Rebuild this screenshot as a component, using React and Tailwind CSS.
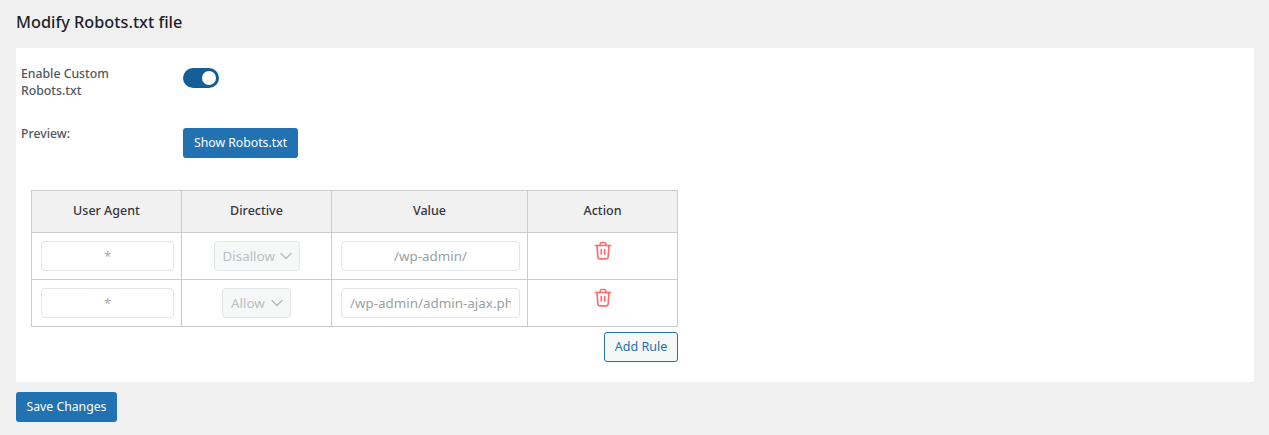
import { ChevronDown } from "lucide-react";

const rules = [
  { agent: "*", directive: "Disallow", selectWidth: "w-[86px]", value: "/wp-admin/", align: "text-center" },
  { agent: "*", directive: "Allow", selectWidth: "w-[69px]", value: "/wp-admin/admin-ajax.php", align: "text-left" },
];

const headers = ["User Agent", "Directive", "Value", "Action"];

function TrashIcon() {
  return (
    <svg width="18" height="20" viewBox="0 0 18 20" fill="none" stroke="#ff6b6f" strokeWidth="1.7" strokeLinecap="round" strokeLinejoin="round">
      <path d="M1.5 4.5h15" />
      <path d="M6.2 4.5V3a1.5 1.5 0 0 1 1.5-1.5h2.6A1.5 1.5 0 0 1 11.8 3v1.5" />
      <path d="M3 4.5l.8 11.5a2 2 0 0 0 2 1.8h6.4a2 2 0 0 0 2-1.8L15 4.5" />
      <path d="M7.3 8.5v4.5M10.7 8.5v4.5" />
    </svg>
  );
}

function RuleRow({ rule }) {
  return (
    <tr>
      <td className="border border-[#ccc] h-[47px] px-[9px] py-0 align-middle">
        <input
          readOnly
          value={rule.agent}
          className="w-[133px] h-[30px] block rounded border border-[#e2e4e7] bg-white text-center text-[13px] text-[#a7aaad] outline-none"
        />
      </td>
      <td className="border border-[#ccc] px-0 py-0 align-middle text-center">
        <div className={`relative inline-block align-middle h-[30px] ${rule.selectWidth}`}>
          <select
            disabled
            className="appearance-none w-full h-full rounded border border-[#e2e4e7] bg-[#f6f7f7] pl-2 text-[13.4px] text-[#bcbfc2] outline-none"
          >
            <option>{rule.directive}</option>
          </select>
          <ChevronDown size={20} strokeWidth={1.5} className="absolute right-[4px] top-[5px] text-[#b5b8bb]" />
        </div>
      </td>
      <td className="border border-[#ccc] px-[9px] py-0 align-middle">
        <input
          readOnly
          value={rule.value}
          className={`w-[179px] h-[30px] block rounded border border-[#e2e4e7] bg-white px-2 text-[13.4px] text-[#9b9fa3] outline-none ${rule.align}`}
        />
      </td>
      <td className="border border-[#ccc] p-0 align-top text-center">
        <div className="flex justify-center pt-[8px]">
          <TrashIcon />
        </div>
      </td>
    </tr>
  );
}

export default function App() {
  return (
    <div className="min-h-[435px] bg-[#f0f0f1] px-4 pt-[10px] text-[#50575e] font-['Noto_Sans','Open_Sans',sans-serif] text-[13px]">
      <h1 className="text-[16.3px] leading-[24px] font-medium text-[#1d2327] mb-[14px]">Modify Robots.txt file</h1>

      <div className="bg-white w-[1238px] h-[334px] pt-[17px] pl-[5px]">
        <div className="flex">
          <div className="w-[162px] text-[12.25px] leading-[17px] font-medium">
            Enable Custom
            <br />
            Robots.txt
          </div>
          <div className="mt-[3px] w-9 h-5 rounded-full bg-[#135e96] flex items-center justify-end pr-[3px]">
            <span className="w-[14px] h-[14px] rounded-full bg-white" />
          </div>
        </div>

        <div className="flex mt-[29px]">
          <div className="w-[162px] -mt-[3px] text-[12.25px] leading-[17px] font-medium">Preview:</div>
          <button className="w-[115px] h-[30px] rounded-[3px] bg-[#2271b1] text-white text-[12.25px]">Show Robots.txt</button>
        </div>

        <div className="w-[647px] ml-[10px] mt-[32px]">
          <table className="w-[647px] table-fixed border-collapse">
            <colgroup>
              <col className="w-[150px]" />
              <col className="w-[150px]" />
              <col className="w-[196px]" />
              <col className="w-[150px]" />
            </colgroup>
            <thead>
              <tr className="bg-[#f1f1f1]">
                {headers.map((h) => (
                  <th key={h} className="border border-[#ccc] h-[42px] text-center text-[12.5px] font-medium text-[#32373c]">
                    {h}
                  </th>
                ))}
              </tr>
            </thead>
            <tbody>
              {rules.map((rule) => (
                <RuleRow key={rule.directive} rule={rule} />
              ))}
            </tbody>
          </table>
          <div className="flex justify-end mt-[5px]">
            <button className="w-[74px] h-[30px] rounded-[3px] border border-[#2271b1] bg-[#f6f7f7] text-[#2271b1] text-[12.5px]">Add Rule</button>
          </div>
        </div>
      </div>

      <button className="mt-[10px] w-[101px] h-[30px] rounded-[3px] bg-[#2271b1] text-white text-[12.25px]">Save Changes</button>
    </div>
  );
}
